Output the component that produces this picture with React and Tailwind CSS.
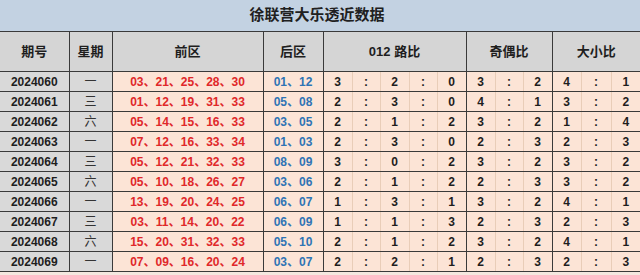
const ROWS = [
  ['2024060', '一', '03、21、25、28、30', '01、12', [3, 2, 0], [3, 2], [4, 1]],
  ['2024061', '三', '01、12、19、31、33', '05、08', [2, 3, 0], [4, 1], [3, 2]],
  ['2024062', '六', '05、14、15、16、33', '03、05', [2, 1, 2], [3, 2], [1, 4]],
  ['2024063', '一', '07、12、16、33、34', '01、03', [2, 3, 0], [2, 3], [2, 3]],
  ['2024064', '三', '05、12、21、32、33', '08、09', [3, 0, 2], [3, 2], [3, 2]],
  ['2024065', '六', '05、10、18、26、27', '03、06', [2, 1, 2], [2, 3], [3, 2]],
  ['2024066', '一', '13、19、20、24、25', '06、07', [1, 3, 1], [3, 2], [4, 1]],
  ['2024067', '三', '03、11、14、20、22', '06、09', [1, 1, 3], [2, 3], [2, 3]],
  ['2024068', '六', '15、20、31、32、33', '05、10', [2, 1, 2], [3, 2], [4, 1]],
  ['2024069', '一', '07、09、16、20、24', '03、07', [2, 2, 1], [2, 3], [2, 3]],
];

const WIDTHS = [69, 43, 151, 60, 29, 28, 29, 28, 29, 29, 28, 29, 29, 30, 29];

function Ratio({ vals, last }) {
  const cells = [];
  vals.forEach((v, i) => {
    if (i > 0) {
      cells.push(
        <td key={'c' + i} className="border-y border-y-[#3a3a3a] border-x border-x-[#e9cdb8] bg-[#fce4d6] text-center">:</td>
      );
    }
    const edge = i === vals.length - 1;
    cells.push(
      <td
        key={'v' + i}
        className={`border-y border-y-[#3a3a3a] bg-[#fce4d6] text-center ${
          edge ? 'border-r border-r-[#3a3a3a] border-l border-l-[#e9cdb8]' : i === 0 ? 'border-l border-l-[#3a3a3a] border-r border-r-[#e9cdb8]' : 'border-x border-x-[#e9cdb8]'
        } ${last && edge ? 'border-r-0' : ''}`}
      >
        {v}
      </td>
    );
  });
  return cells;
}

export default function App() {
  return (
    <div
      className="w-[640px] h-[275px] bg-[#f4e8e0] text-[#1e1e1e] overflow-hidden"
      style={{ fontFamily: '"Liberation Sans", "Noto Sans CJK SC", sans-serif' }}
    >
      <div className="h-[31px] bg-[#c3d2e2] flex items-center justify-center text-[15px] font-bold text-[#202020] pr-[6px]">
        徐联营大乐透近数据
      </div>
      <table className="w-[640px] table-fixed border-collapse text-[12px] font-bold">
        <colgroup>
          {WIDTHS.map((w, i) => (
            <col key={i} style={{ width: w }} />
          ))}
        </colgroup>
        <thead>
          <tr className="h-[40px] bg-[#d5d5d5] text-[13px]">
            <th className="border-y border-r border-[#3a3a3a]">期号</th>
            <th className="border border-[#3a3a3a]">星期</th>
            <th className="border border-[#3a3a3a]">前区</th>
            <th className="border border-[#3a3a3a]">后区</th>
            <th colSpan={5} className="border border-[#3a3a3a]">012 路比</th>
            <th colSpan={3} className="border border-[#3a3a3a]">奇偶比</th>
            <th colSpan={3} className="border-y border-l border-[#3a3a3a]">大小比</th>
          </tr>
        </thead>
        <tbody>
          {ROWS.map((r) => (
            <tr key={r[0]} className="h-[20px] leading-none">
              <td className="border-y border-r border-[#3a3a3a] bg-[#d9d9d9] text-center">{r[0]}</td>
              <td className="border border-[#3a3a3a] bg-[#d9d9d9] text-center font-normal text-[#333]">{r[1]}</td>
              <td className="border border-[#3a3a3a] bg-[#fce4d6] text-center text-[#e0282a]">{r[2]}</td>
              <td className="border border-[#3a3a3a] bg-[#fce4d6] text-center text-[#2f74b5]">{r[3]}</td>
              <Ratio vals={r[4]} />
              <Ratio vals={r[5]} />
              <Ratio vals={r[6]} last />
            </tr>
          ))}
        </tbody>
      </table>
    </div>
  );
}
